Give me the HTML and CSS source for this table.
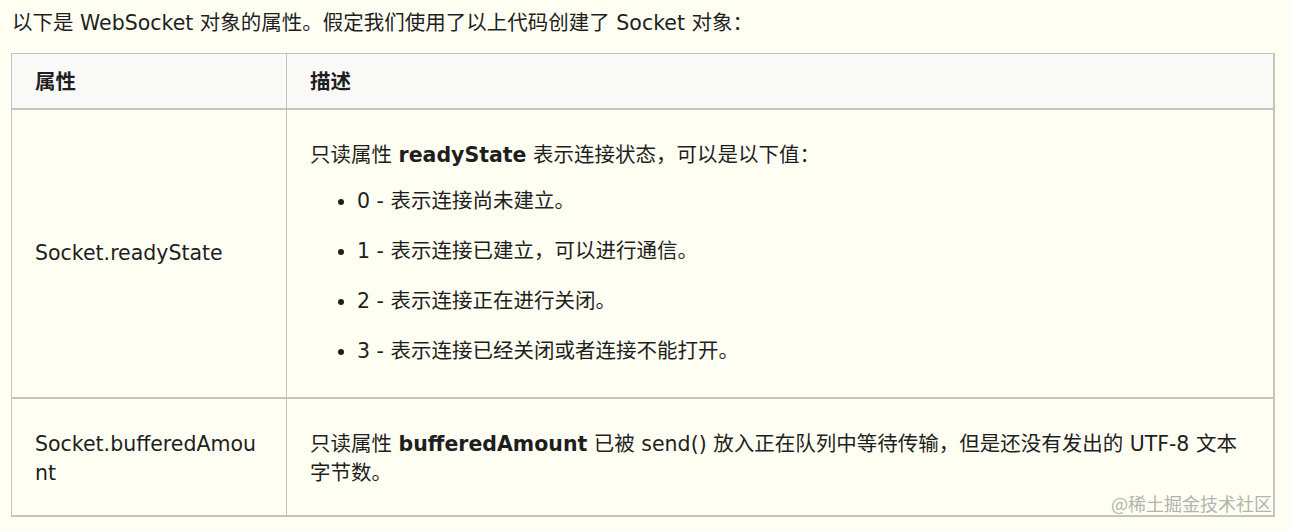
FILE: index.html
```html
<!DOCTYPE html>
<html lang="zh-CN">
<head>
<meta charset="UTF-8">
<title>WebSocket 属性</title>
<link rel="stylesheet" href="styles.css">
</head>
<body>
<div class="page">
    <p class="intro">以下是 WebSocket 对象的属性。假定我们使用了以上代码创建了 Socket 对象：</p>
    <table class="props">
        <thead>
            <tr>
                <th class="col-name">属性</th>
                <th>描述</th>
            </tr>
        </thead>
        <tbody>
            <tr>
                <td class="col-name">Socket.readyState</td>
                <td>
                    <p>只读属性 <strong>readyState</strong> 表示连接状态，可以是以下值：</p>
                    <ul>
                        <li>0 - 表示连接尚未建立。</li>
                        <li>1 - 表示连接已建立，可以进行通信。</li>
                        <li>2 - 表示连接正在进行关闭。</li>
                        <li>3 - 表示连接已经关闭或者连接不能打开。</li>
                    </ul>
                </td>
            </tr>
            <tr class="short-row">
                <td class="col-name">Socket.bufferedAmount</td>
                <td>
                    <p>只读属性 <strong>bufferedAmount</strong> 已被 send() 放入正在队列中等待传输，但是还没有发出的 UTF-8 文本字节数。</p>
                </td>
            </tr>
        </tbody>
    </table>
    <span class="watermark">@稀土掘金技术社区</span>
</div>
</body>
</html>
```

FILE: styles.css
```css
body {
    margin: 0;
    background-color: #fefef3;
    font-family: "DejaVu Sans", "Noto Sans CJK SC", sans-serif;
    font-size: 20.5px;
    line-height: 29px;
    color: #1e1e1e;
}

.page {
    position: relative;
    padding: 9px 15px 0 11px;
}

.intro {
    margin: 0 0 15px 1px;
}

.props {
    width: 100%;
    border-collapse: separate;
    border-spacing: 0;
    border-top: 1px solid #c4c4bc;
    border-left: 1px solid #c4c4bc;
    border-right: 2px solid #c4c4bc;
}

.props th,
.props td {
    padding: 12px 23px;
    text-align: left;
    vertical-align: middle;
    border-bottom: 2px solid #c4c4bc;
}

.props th {
    background-color: #f9f9f8;
    font-weight: bold;
    padding-top: 14px;
    padding-bottom: 11px;
}

.props .col-name {
    width: 228px;
    border-right: 1px solid #c4c4bc;
    word-break: break-all;
}

.props td p {
    margin: 19px 0 17px;
}

.props .short-row td p {
    margin: 19px 0 15px;
}

.props .short-row .col-name {
    vertical-align: top;
    padding-top: 31px;
}

.props ul {
    margin: 0;
    padding-left: 47px;
}

.props li {
    margin-bottom: 21px;
}

.props li:last-child {
    margin-bottom: 19px;
}

.watermark {
    position: absolute;
    right: 18px;
    bottom: 3px;
    font-family: "Noto Sans CJK SC", sans-serif;
    font-size: 18px;
    line-height: 22px;
    color: #b4b4ac;
}
```
